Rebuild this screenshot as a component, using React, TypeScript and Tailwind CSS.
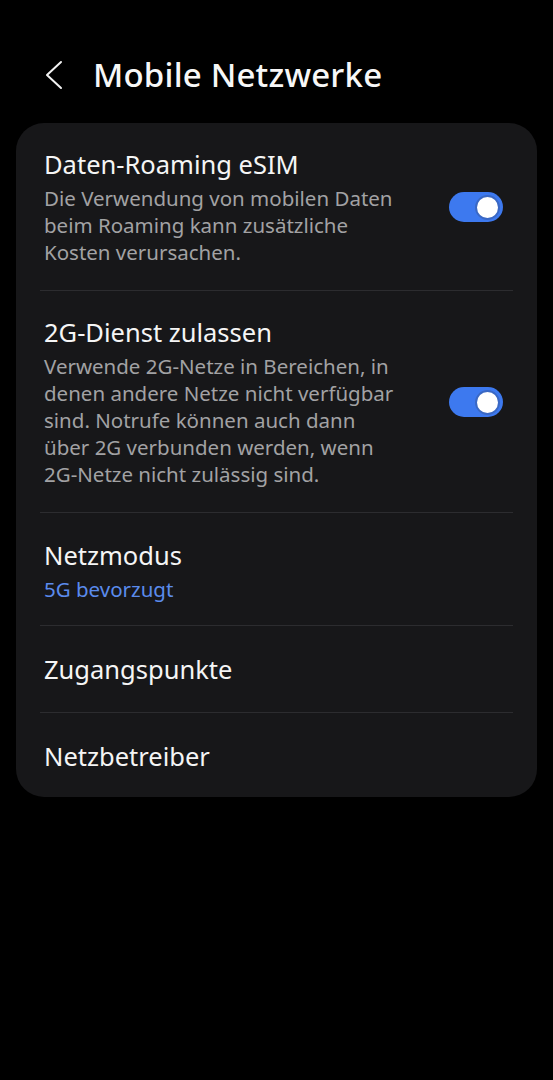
import React from "react";

function Toggle() {
  return (
    <div className="flex h-[30px] w-[54px] shrink-0 items-center justify-end rounded-full bg-[#3d79ef] pr-[3px]">
      <div className="h-[25px] w-[25px] rounded-full border-2 border-[#3a68c4] bg-white" />
    </div>
  );
}

const Divider = () => <div className="mx-[24px] h-px bg-[#2c2c2f]" />;

function Lines({ lines }: { lines: string[] }) {
  return (
    <p className="mt-[5px] text-[20.5px] leading-[27px] text-[#a2a2a4]">
      {lines.map((l, i) => (
        <span key={i} className="block whitespace-nowrap">
          {l}
        </span>
      ))}
    </p>
  );
}

export default function App() {
  return (
    <div
      className="min-h-[1080px] w-full bg-black text-white"
      style={{ fontFamily: '"Noto Sans", "Open Sans", sans-serif' }}
    >
      <header className="flex h-[123px] items-center pl-[44px] pt-[26px]">
        <svg width="20" height="30" viewBox="0 0 20 30" className="mr-[29px]" fill="none">
          <path d="M17 2 L3 15 L17 28" stroke="#f2f2f2" strokeWidth="2" strokeLinecap="round" strokeLinejoin="round" />
        </svg>
        <h1 className="text-[33px] font-medium leading-[40px] tracking-[0.2px] text-[#f7f7f7]">Mobile Netzwerke</h1>
      </header>

      <div className="mx-[16px] rounded-[28px] bg-[#171719]">
        <div className="flex items-center gap-[20px] pb-[24px] pl-[28px] pr-[34px] pt-[25px]">
          <div className="min-w-0 flex-1">
            <div className="text-[25.5px] leading-[32px] text-[#f5f5f5]">Daten-Roaming eSIM</div>
            <Lines lines={["Die Verwendung von mobilen Daten", "beim Roaming kann zusätzliche", "Kosten verursachen."]} />
          </div>
          <Toggle />
        </div>
        <Divider />
        <div className="flex items-center gap-[20px] pb-[24px] pl-[28px] pr-[34px] pt-[25px]">
          <div className="min-w-0 flex-1">
            <div className="text-[25.5px] leading-[32px] text-[#f5f5f5]">2G-Dienst zulassen</div>
            <Lines
              lines={[
                "Verwende 2G-Netze in Bereichen, in",
                "denen andere Netze nicht verfügbar",
                "sind. Notrufe können auch dann",
                "über 2G verbunden werden, wenn",
                "2G-Netze nicht zulässig sind.",
              ]}
            />
          </div>
          <Toggle />
        </div>
        <Divider />
        <div className="pb-[22px] pl-[28px] pr-[34px] pt-[26px]">
          <div className="text-[25.5px] leading-[32px] text-[#f5f5f5]">Netzmodus</div>
          <div className="mt-[5px] text-[20.5px] leading-[27px] text-[#5b8bec]">5G bevorzugt</div>
        </div>
        <Divider />
        <div className="pb-[27px] pl-[28px] pr-[34px] pt-[27px]">
          <div className="text-[25.5px] leading-[32px] text-[#f5f5f5]">Zugangspunkte</div>
        </div>
        <Divider />
        <div className="pb-[25px] pl-[28px] pr-[34px] pt-[27px]">
          <div className="text-[25.5px] leading-[32px] text-[#f5f5f5]">Netzbetreiber</div>
        </div>
      </div>
    </div>
  );
}
